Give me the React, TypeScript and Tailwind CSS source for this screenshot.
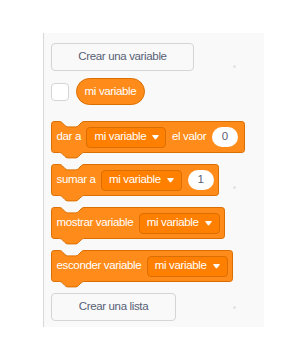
import React from "react";

const S = 0.675;

function blockPath(w: number, h: number): string {
  const W = w / S;
  const H = h / S;
  return [
    `M 0,4 A 4,4 0 0,1 4,0 H 12`,
    `c 2,0 3,1 4,2 l 4,4 c 1,1 2,2 4,2 h 12 c 2,0 3,-1 4,-2 l 4,-4 c 1,-1 2,-2 4,-2`,
    `H ${W - 4} a 4,4 0 0,1 4,4 V ${H - 4} a 4,4 0 0,1 -4,4 H 48`,
    `c -2,0 -3,1 -4,2 l -4,4 c -1,1 -2,2 -4,2 h -12 c -2,0 -3,-1 -4,-2 l -4,-4 c -1,-1 -2,-2 -4,-2`,
    `H 4 a 4,4 0 0,1 -4,-4 z`,
  ].join(" ");
}

function BlockShape({ w }: { w: number }) {
  const h = 32;
  return (
    <svg
      className="absolute left-0 top-0 overflow-visible"
      width={w}
      height={h + 6}
      viewBox={`0 0 ${w} ${h + 6}`}
    >
      <g transform={`translate(0.5 0.5) scale(${S})`}>
        <path
          d={blockPath(w - 1, h - 1)}
          fill="#FF8C1A"
          stroke="#DB6E00"
          strokeWidth={1 / S}
        />
      </g>
    </svg>
  );
}

function Caret() {
  return (
    <svg width="7" height="5" viewBox="0 0 7 5" className="shrink-0">
      <path d="M0.6 0.6 H6.4 L3.5 4.2 Z" fill="#fff" stroke="#fff" strokeWidth="1" strokeLinejoin="round" />
    </svg>
  );
}

function Dropdown({ w }: { w: string }) {
  return (
    <div
      className={`flex h-[21px] ${w} shrink-0 items-center whitespace-nowrap rounded-[4px] border border-[#DB6E00] bg-[#FF8000] pl-[7px] gap-[6px] text-white`}
    >
      <span>mi variable</span>
      <Caret />
    </div>
  );
}

function NumInput({ v }: { v: string }) {
  return (
    <div className="flex h-[20px] w-[26px] shrink-0 items-center justify-center rounded-full bg-white text-[#575E75]">
      {v}
    </div>
  );
}

const font = { fontFamily: '"Liberation Sans", Arial, Helvetica, sans-serif' };

export default function App() {
  return (
    <div className="h-[358px] w-[288px] bg-white pt-[33px] pl-[43px]" style={font}>
      <div className="relative flex h-[294px] w-[221px] flex-col border-l border-[#d9d9d9] bg-[#f9f9f9] pl-[7px] pt-[10px] text-[11.5px] tracking-[-0.35px] whitespace-nowrap">
        <div className="absolute left-[189px] top-[32px] h-[3px] w-[3px] rounded-full bg-[#e3e3e3]" />
        <div className="absolute left-[189px] top-[153px] h-[3px] w-[3px] rounded-full bg-[#e3e3e3]" />
        <div className="absolute left-[189px] top-[273px] h-[3px] w-[3px] rounded-full bg-[#e3e3e3]" />

        <div className="relative flex h-[28px] w-[143px] items-center justify-center rounded-[4px] border border-[#d5d5d5] bg-[#f9f9f9] text-[#575E75]">
          Crear una variable
        </div>

        <div className="mt-[7px] flex h-[27px] items-center gap-[7px]">
          <div className="h-[18px] w-[18px] rounded-[4px] border border-[#d5d5d5] bg-white" />
          <div className="flex h-[27px] w-[69px] items-center justify-center rounded-full border border-[#DB6E00] bg-[#FF8C1A] text-white">
            mi variable
          </div>
        </div>

        <div className="relative mt-[16px] h-[32px] w-[194px]">
          <BlockShape w={194} />
          <div className="relative flex h-[32px] items-center gap-[5.5px] pl-[5.5px] text-white">
            <span>dar a</span>
            <Dropdown w="w-[80px]" />
            <span>el valor</span>
            <NumInput v="0" />
          </div>
        </div>

        <div className="relative mt-[11px] h-[32px] w-[168px]">
          <BlockShape w={168} />
          <div className="relative flex h-[32px] items-center gap-[5.5px] pl-[5.5px] text-white">
            <span>sumar a</span>
            <Dropdown w="w-[81px]" />
            <NumInput v="1" />
          </div>
        </div>

        <div className="relative mt-[11px] h-[32px] w-[174px]">
          <BlockShape w={174} />
          <div className="relative flex h-[32px] items-center gap-[5.5px] pl-[5.5px] text-white">
            <span>mostrar variable</span>
            <Dropdown w="w-[81px]" />
          </div>
        </div>

        <div className="relative mt-[11px] h-[32px] w-[182px]">
          <BlockShape w={182} />
          <div className="relative flex h-[32px] items-center gap-[5.5px] pl-[5.5px] text-white">
            <span>esconder variable</span>
            <Dropdown w="w-[81px]" />
          </div>
        </div>

        <div className="relative mt-[11px] flex h-[28px] w-[125px] items-center justify-center rounded-[4px] border border-[#d5d5d5] bg-[#f9f9f9] text-[#575E75]">
          Crear una lista
        </div>
      </div>
    </div>
  );
}
